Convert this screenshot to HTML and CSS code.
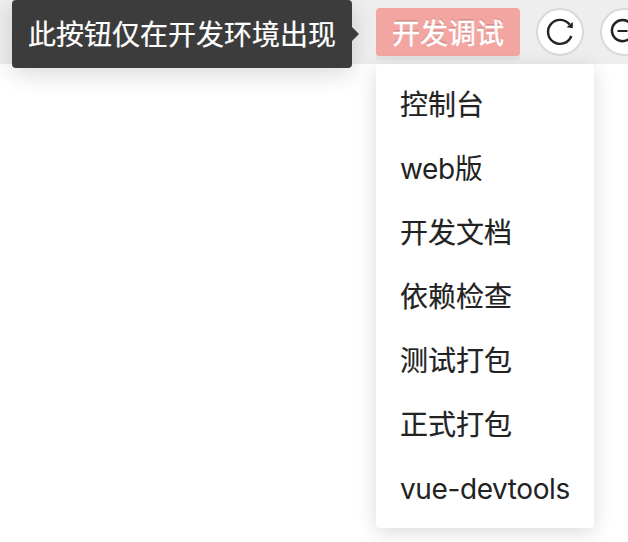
FILE: index.html
```html
<!DOCTYPE html>
<html lang="zh-CN">
<head>
<meta charset="utf-8">
<title>开发调试</title>
<link rel="stylesheet" href="styles.css">
</head>
<body>
<header class="toolbar">
  <div class="debug">
    <button class="debug-button">开发调试</button>
    <div class="tooltip">此按钮仅在开发环境出现</div>
    <ul class="menu">
      <li>控制台</li>
      <li class="latin">web版</li>
      <li>开发文档</li>
      <li>依赖检查</li>
      <li>测试打包</li>
      <li>正式打包</li>
      <li class="latin">vue-devtools</li>
    </ul>
  </div>
  <button class="round" aria-label="刷新">
    <svg viewBox="0 0 44 44" width="44" height="44">
      <path d="M33.3 26A12 12 0 1 1 31.6 14.6" fill="none" stroke="#222" stroke-width="2.4"/>
      <path d="M34.8 12V18.3L28.6 17.2Z" fill="#222"/>
    </svg>
  </button>
  <button class="round" aria-label="缩小">
    <svg viewBox="0 0 44 44" width="44" height="44">
      <circle cx="20.5" cy="20.6" r="10.6" fill="none" stroke="#222" stroke-width="2.4"/>
      <path d="M15.5 21H25.5M28.2 28.2L35 35" fill="none" stroke="#222" stroke-width="2.2"/>
    </svg>
  </button>
</header>
</body>
</html>
```
FILE: styles.css
```css
* { box-sizing: border-box; }

body {
  margin: 0;
  height: 542px;
  overflow: hidden;
  background: #fff;
  color: #222;
  font: 28px/44px Inter, "Noto Sans CJK SC", sans-serif;
  -webkit-text-stroke: 0.2px currentColor;
}

.toolbar {
  display: flex;
  align-items: center;
  gap: 16px;
  height: 64px;
  padding-left: 376px;
  background: #eee;
}

button {
  border: 0;
  padding: 0;
  font: inherit;
}

.debug {
  position: relative;
  flex: none;
}

.debug-button {
  display: block;
  width: 144px;
  height: 48px;
  padding-top: 4px;
  border-radius: 4px;
  background: #f3a6a1;
  color: #fff;
  line-height: 44px;
  text-shadow: 0 -2px 0 rgba(0, 0, 0, 0.12);
  box-shadow: 0 4px 0 rgba(0, 0, 0, 0.045);
  -webkit-text-stroke-width: 0.4px;
}

.round {
  flex: none;
  width: 48px;
  height: 48px;
  border: 2px solid #d9d9d9;
  border-radius: 50%;
  background: #fff;
}

.round svg { display: block; }

.tooltip {
  position: absolute;
  top: -8px;
  right: 168px;
  width: 340px;
  height: 68px;
  padding: 13px 16px 11px;
  border-radius: 4px;
  background: #3c3c3c;
  color: #fff;
  white-space: nowrap;
  box-shadow: 0 6px 24px rgba(0, 0, 0, 0.15);
}

.tooltip::after {
  content: "";
  position: absolute;
  top: 27px;
  left: 100%;
  border: 7px solid transparent;
  border-left-color: #3c3c3c;
  border-right: 0;
}

.menu {
  position: absolute;
  top: 56px;
  left: 0;
  width: 218px;
  margin: 0;
  padding: 8px 0;
  border-radius: 4px;
  background: #fff;
  list-style: none;
  box-shadow: 0 4px 20px rgba(0, 0, 0, 0.15);
}

.menu li {
  height: 64px;
  padding: 11px 24px 9px;
  white-space: nowrap;
}

.menu .latin {
  letter-spacing: -0.4px;
  -webkit-text-stroke-width: 0;
}
```
